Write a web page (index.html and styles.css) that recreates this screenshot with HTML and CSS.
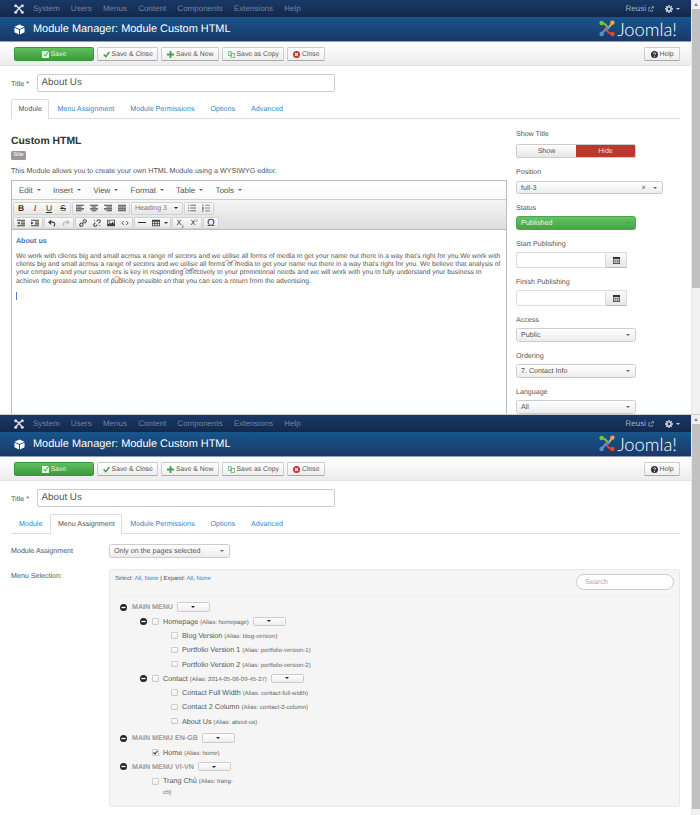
FILE: index.html
```html
<!DOCTYPE html>
<html lang="en">
<head>
<meta charset="utf-8">
<title>Module Manager: Module Custom HTML</title>
<link rel="stylesheet" href="styles.css">
</head>
<body>
<svg class="defs" width="0" height="0" aria-hidden="true">
  <defs>
    <symbol id="i-joomla" viewBox="0 0 12 12"><g fill="none" stroke="currentColor" stroke-width="2"><path d="M2 2c3 1 5 4 8 8"/><path d="M10 2c-3 1-5 4-8 8"/></g><g fill="currentColor"><circle cx="2" cy="2" r="1.8"/><circle cx="10" cy="2" r="1.8"/><circle cx="2" cy="10" r="1.8"/><circle cx="10" cy="10" r="1.8"/></g></symbol>
    <symbol id="i-cube" viewBox="0 0 12 12"><path fill="currentColor" d="M6 .5 11.5 3 6 5.5.5 3zM.5 4l5 2.3v5.2L.5 9zM11.5 4l-5 2.3v5.2l5-2.5z"/></symbol>
    <symbol id="i-logo" viewBox="0 0 16 17"><g fill="none" stroke-width="2.2"><path stroke="#7ac143" d="M3 3c3 0 5 3 7 6"/><path stroke="#f9a541" d="M13 3c-1 3-4 5-7 7"/><path stroke="#f44321" d="M13 14c-3 0-5-3-7-6"/><path stroke="#5091cd" d="M3 14c1-3 4-5 7-7"/></g><circle cx="2.6" cy="3" r="2.2" fill="#7ac143"/><circle cx="13.4" cy="2.6" r="2.2" fill="#f9a541"/><circle cx="13.4" cy="14" r="2.2" fill="#f44321"/><circle cx="2.6" cy="14" r="2.2" fill="#5091cd"/></symbol>
    <symbol id="i-ext" viewBox="0 0 10 10"><path fill="none" stroke="currentColor" stroke-width="1.2" d="M7.5 6v2.5h-6v-6H4M5 5l3.500-3.500M6 1h3v3"/></symbol>
    <symbol id="i-gear" viewBox="0 0 12 12"><circle cx="6" cy="6" r="3.200" fill="none" stroke="currentColor" stroke-width="2.200"/><path stroke="currentColor" stroke-width="2" d="M6 0v2M6 10v2M0 6h2M10 6h2M1.800 1.800l1.400 1.400M8.800 8.800l1.400 1.400M10.200 1.800 8.800 3.200M3.200 8.800l-1.400 1.400"/></symbol>
    <symbol id="i-save" viewBox="0 0 10 10"><path fill="currentColor" d="M0 0h8l2 2v8H0zm2 5.500 3 2.500 4-6-1-.8L4.700 6 3 4.700z" fill-rule="evenodd"/></symbol>
    <symbol id="i-check" viewBox="0 0 10 10"><path fill="none" stroke="currentColor" stroke-width="2.200" d="m1 5 3 3 5-6.500"/></symbol>
    <symbol id="i-plus" viewBox="0 0 10 10"><path fill="currentColor" d="M3.700 0h2.600v3.700H10v2.600H6.300V10H3.700V6.300H0V3.700h3.700z"/></symbol>
    <symbol id="i-copy" viewBox="0 0 10 10"><path fill="none" stroke="currentColor" d="M.5.500h4v6h-4zM4.500 3.500h5v6h-5z"/></symbol>
    <symbol id="i-close" viewBox="0 0 10 10"><circle cx="5" cy="5" r="5" fill="currentColor"/><path stroke="#fff" stroke-width="1.600" d="m3 3 4 4M7 3 3 7"/></symbol>
    <symbol id="i-help" viewBox="0 0 10 10"><circle cx="5" cy="5" r="5" fill="currentColor"/><path fill="none" stroke="#fff" stroke-width="1.300" d="M3.400 3.800C3.600 2 6.700 2 6.700 3.800 6.700 5 5 4.800 5 6.200"/><path stroke="#fff" stroke-width="1.300" d="M5 7v1.300"/></symbol>
    <symbol id="i-cal" viewBox="0 0 10 10"><path fill="currentColor" fill-rule="evenodd" d="M0 0h10v10H0zm1 3v6h8V3zm1 1h2v1.500H2zm3 0h3v1.500H5zM2 6.500h2V8H2zm3 0h3V8H5z"/></symbol>
    <symbol id="i-minus" viewBox="0 0 10 10"><circle cx="5" cy="5" r="5" fill="currentColor"/><path fill="#fff" d="M2 4h6v2H2z"/></symbol>
    <symbol id="i-left" viewBox="0 0 10 10"><path stroke="currentColor" stroke-width="1.300" d="M0 1.500h10M0 3.800h7M0 6.100h10M0 8.400h7" fill="none"/></symbol>
    <symbol id="i-center" viewBox="0 0 10 10"><path stroke="currentColor" stroke-width="1.300" d="M0 1.500h10M2 3.800h6M0 6.100h10M2 8.400h6" fill="none"/></symbol>
    <symbol id="i-right" viewBox="0 0 10 10"><path stroke="currentColor" stroke-width="1.300" d="M0 1.500h10M3 3.800h7M0 6.100h10M3 8.400h7" fill="none"/></symbol>
    <symbol id="i-just" viewBox="0 0 10 10"><path stroke="currentColor" stroke-width="1.300" d="M0 1.500h10M0 3.800h10M0 6.100h10M0 8.400h10" fill="none"/></symbol>
    <symbol id="i-ul" viewBox="0 0 10 10"><path stroke="currentColor" d="M3 1.500h7M3 5h7M3 8.500h7M0 1.500h1.500M0 5h1.500M0 8.500h1.500" fill="none"/></symbol>
    <symbol id="i-ol" viewBox="0 0 10 10"><path stroke="currentColor" d="M4 1.500h6M4 5h6M4 8.500h6M1 0v3M0 4.500h2V6H0v1.500h2M0 9.500h2" fill="none" stroke-width=".8"/></symbol>
    <symbol id="i-outdent" viewBox="0 0 10 10"><path stroke="currentColor" stroke-width="1.300" d="M0 1.500h10M5 3.800h5M5 6.100h5M0 8.400h10" fill="none"/><path fill="currentColor" d="M3.500 3.200v3.600L0 5z"/></symbol>
    <symbol id="i-indent" viewBox="0 0 10 10"><path stroke="currentColor" stroke-width="1.300" d="M0 1.500h10M5 3.800h5M5 6.100h5M0 8.400h10" fill="none"/><path fill="currentColor" d="M0 3.200v3.600L3.500 5z"/></symbol>
    <symbol id="i-undo" viewBox="0 0 10 10"><path fill="none" stroke="currentColor" stroke-width="1.600" d="M3 4h3c3 0 3 4 1 5"/><path fill="currentColor" d="M4 .5v7L0 4z"/></symbol>
    <symbol id="i-redo" viewBox="0 0 10 10"><path fill="none" stroke="currentColor" stroke-width="1.600" d="M7 4H4c-3 0-3 4-1 5"/><path fill="currentColor" d="M6 .5v7L10 4z"/></symbol>
    <symbol id="i-link" viewBox="0 0 10 10"><path fill="none" stroke="currentColor" stroke-width="1.300" d="M4.500 3 6 1.500c2-1.500 4 .7 2.500 2.500L7 5.500M5.500 7 4 8.500C2 10 0 7.800 1.500 6L3 4.500M3.500 6.500l3-3"/></symbol>
    <symbol id="i-unlink" viewBox="0 0 10 10"><path fill="none" stroke="currentColor" stroke-width="1.300" d="M4.500 3 6 1.500c2-1.500 4 .7 2.500 2.500L7 5.500M5.500 7 4 8.500C2 10 0 7.800 1.500 6L3 4.500"/><path stroke="currentColor" d="m1 1 1.500 1.500M7.500 7.500 9 9"/></symbol>
    <symbol id="i-image" viewBox="0 0 10 10"><path fill="currentColor" fill-rule="evenodd" d="M0 1h10v8H0zm1 1v5l2.500-2.500L5 6l2-2.500L9 6V2zm1 .5h1.500V4H2z"/></symbol>
    <symbol id="i-code" viewBox="0 0 10 10"><path fill="none" stroke="currentColor" stroke-width="1.100" d="M3.500 2.500 1 5l2.500 2.500M6.500 2.500 9 5 6.500 7.500"/></symbol>
    <symbol id="i-table" viewBox="0 0 10 10"><path fill="currentColor" fill-rule="evenodd" d="M0 1h10v8H0zm1 2.500V5h2V3.500zm3 0V5h2V3.500zm3 0V5h2V3.500zM1 6v2h2V6zm3 0v2h2V6zm3 0v2h2V6z"/></symbol>
  </defs>
</svg>

<section class="screen screen-top">
  <div class="page">
    <nav class="navbar">
      <svg class="nav-logo"><use href="#i-joomla"/></svg>
      <ul class="nav-menu"><li>System</li><li>Users</li><li>Menus</li><li>Content</li><li>Components</li><li>Extensions</li><li>Help</li></ul>
      <div class="nav-right"><span>Reusi</span><svg class="nav-ext"><use href="#i-ext"/></svg><svg class="nav-gear"><use href="#i-gear"/></svg><i class="caret caret-light"></i></div>
    </nav>
    <header class="header">
      <svg class="head-icon"><use href="#i-cube"/></svg>
      <h1>Module Manager: Module Custom HTML</h1>
      <div class="brand"><svg class="brand-mark"><use href="#i-logo"/></svg><span>Joomla!</span></div>
    </header>
    <div class="toolbar">
      <button class="btn btn-save"><svg class="ico"><use href="#i-save"/></svg>Save</button>
      <button class="btn"><svg class="ico ico-green"><use href="#i-check"/></svg>Save &amp; Close</button>
      <button class="btn"><svg class="ico ico-green"><use href="#i-plus"/></svg>Save &amp; New</button>
      <button class="btn"><svg class="ico ico-green"><use href="#i-copy"/></svg>Save as Copy</button>
      <button class="btn"><svg class="ico ico-red"><use href="#i-close"/></svg>Close</button>
      <button class="btn btn-help"><svg class="ico ico-dark"><use href="#i-help"/></svg>Help</button>
    </div>
    <div class="content">
      <div class="title-row"><label>Title *</label><div class="title-input">About Us</div></div>
      <ul class="tabs">
        <li class="tab active">Module</li><li class="tab">Menu Assignment</li><li class="tab">Module Permissions</li><li class="tab">Options</li><li class="tab">Advanced</li>
      </ul>
      <div class="columns">
        <div class="col-main">
          <h2>Custom HTML</h2>
          <span class="badge">Site</span>
          <p class="desc">This Module allows you to create your own HTML Module using a WYSIWYG editor.</p>
          <div class="editor">
            <div class="ed-menu">
              <span>Edit<i class="caret"></i></span><span>Insert<i class="caret"></i></span><span>View<i class="caret"></i></span><span>Format<i class="caret"></i></span><span>Table<i class="caret"></i></span><span>Tools<i class="caret"></i></span>
            </div>
            <div class="ed-tools">
              <div class="ed-row">
                <div class="ed-group"><b class="tb">B</b><i class="tb tb-i">I</i><u class="tb">U</u><s class="tb">S</s></div>
                <div class="ed-group"><svg class="tb-svg"><use href="#i-left"/></svg><svg class="tb-svg"><use href="#i-center"/></svg><svg class="tb-svg"><use href="#i-right"/></svg><svg class="tb-svg"><use href="#i-just"/></svg></div>
                <div class="ed-group ed-list"><span>Heading 3</span><i class="caret caret-dark"></i></div>
                <div class="ed-group"><svg class="tb-svg"><use href="#i-ul"/></svg><svg class="tb-svg"><use href="#i-ol"/></svg></div>
              </div>
              <div class="ed-row">
                <div class="ed-group"><svg class="tb-svg"><use href="#i-outdent"/></svg><svg class="tb-svg"><use href="#i-indent"/></svg></div>
                <div class="ed-group"><svg class="tb-svg"><use href="#i-undo"/></svg><svg class="tb-svg tb-off"><use href="#i-redo"/></svg></div>
                <div class="ed-group"><svg class="tb-svg"><use href="#i-link"/></svg><svg class="tb-svg"><use href="#i-unlink"/></svg><svg class="tb-svg"><use href="#i-image"/></svg><svg class="tb-svg"><use href="#i-code"/></svg></div>
                <div class="ed-group"><span class="tb-hr"></span><svg class="tb-svg"><use href="#i-table"/></svg><i class="caret caret-tool"></i></div>
                <div class="ed-group"><span class="tb tb-sub">X<sub>2</sub></span><span class="tb tb-sub">X<sup>2</sup></span></div>
                <div class="ed-group"><span class="tb tb-omega">Ω</span></div>
              </div>
            </div>
            <div class="ed-body">
              <h3>About us</h3>
              <p>We work with clients big and small across a range of sectors and we <span class="spell">utilise</span> all forms of media to get your name out there in a way that's right for you.We work with<br>clients big and small across a range of sectors and we <span class="spell">utilise</span> all forms of media to get your name out there in a way that's right for you. We believe that analysis of<br>your company and your custom <span class="spell">ers</span> is key in responding effectively to your promotional needs and we will work with you to fully understand your business to<br>achieve the greatest amount of publicity possible so that you can see a return from the advertising.</p>
              <span class="ed-caret"></span>
            </div>
          </div>
        </div>
        <aside class="col-side">
          <div class="field field-toggle"><label>Show Title</label><div class="toggle"><span>Show</span><span class="toggle-on">Hide</span></div></div>
          <div class="field field-pos"><label>Position</label><div class="select select-wide"><span>full-3</span><em>×</em><i class="caret"></i></div></div>
          <div class="field"><label>Status</label><div class="select select-green"><span>Published</span><i class="caret"></i></div></div>
          <div class="field"><label>Start Publishing</label><div class="date"><div class="date-input"></div><div class="date-btn"><svg class="ico ico-dark"><use href="#i-cal"/></svg></div></div></div>
          <div class="field"><label>Finish Publishing</label><div class="date"><div class="date-input"></div><div class="date-btn"><svg class="ico ico-dark"><use href="#i-cal"/></svg></div></div></div>
          <div class="field"><label>Access</label><div class="select"><span>Public</span><i class="caret"></i></div></div>
          <div class="field"><label>Ordering</label><div class="select"><span>7. Contact Info</span><i class="caret"></i></div></div>
          <div class="field"><label>Language</label><div class="select"><span>All</span><i class="caret"></i></div></div>
        </aside>
      </div>
    </div>
  </div>
  <div class="scrollbar"><span class="arrow"></span><span class="thumb"></span></div>
</section>

<section class="screen screen-bottom">
  <div class="page">
    <nav class="navbar">
      <svg class="nav-logo"><use href="#i-joomla"/></svg>
      <ul class="nav-menu"><li>System</li><li>Users</li><li>Menus</li><li>Content</li><li>Components</li><li>Extensions</li><li>Help</li></ul>
      <div class="nav-right"><span>Reusi</span><svg class="nav-ext"><use href="#i-ext"/></svg><svg class="nav-gear"><use href="#i-gear"/></svg><i class="caret caret-light"></i></div>
    </nav>
    <header class="header">
      <svg class="head-icon"><use href="#i-cube"/></svg>
      <h1>Module Manager: Module Custom HTML</h1>
      <div class="brand"><svg class="brand-mark"><use href="#i-logo"/></svg><span>Joomla!</span></div>
    </header>
    <div class="toolbar">
      <button class="btn btn-save"><svg class="ico"><use href="#i-save"/></svg>Save</button>
      <button class="btn"><svg class="ico ico-green"><use href="#i-check"/></svg>Save &amp; Close</button>
      <button class="btn"><svg class="ico ico-green"><use href="#i-plus"/></svg>Save &amp; New</button>
      <button class="btn"><svg class="ico ico-green"><use href="#i-copy"/></svg>Save as Copy</button>
      <button class="btn"><svg class="ico ico-red"><use href="#i-close"/></svg>Close</button>
      <button class="btn btn-help"><svg class="ico ico-dark"><use href="#i-help"/></svg>Help</button>
    </div>
    <div class="content">
      <div class="title-row"><label>Title *</label><div class="title-input">About Us</div></div>
      <ul class="tabs tabs-second">
        <li class="tab">Module</li><li class="tab active">Menu Assignment</li><li class="tab">Module Permissions</li><li class="tab">Options</li><li class="tab">Advanced</li>
      </ul>
      <div class="assign-row"><label>Module Assignment</label><div class="select select-assign"><span>Only on the pages selected</span><i class="caret"></i></div></div>
      <div class="selection-row">
        <label>Menu Selection:</label>
        <div class="well">
          <div class="well-head">
            <p class="well-links">Select: <a>All</a>, <a>None</a> <span class="sep">|</span> Expand: <a>All</a>, <a>None</a></p>
            <div class="search">Search</div>
          </div>
          <ul class="tree">
            <li class="row lv0"><svg class="minus"><use href="#i-minus"/></svg><strong>MAIN MENU</strong><span class="mini mini-a"><i class="caret caret-dark"></i></span></li>
            <li class="row lv1"><svg class="minus"><use href="#i-minus"/></svg><span class="cb"></span><span class="item">Homepage <small>(Alias: homepage)</small></span><span class="mini"><i class="caret caret-dark"></i></span></li>
            <li class="row lv2"><span class="cb"></span><span class="item">Blog Version <small>(Alias: blog-version)</small></span></li>
            <li class="row lv2"><span class="cb"></span><span class="item">Portfolio Version 1 <small>(Alias: portfolio-version-1)</small></span></li>
            <li class="row lv2"><span class="cb"></span><span class="item">Portfolio Version 2 <small>(Alias: portfolio-version-2)</small></span></li>
            <li class="row lv1"><svg class="minus"><use href="#i-minus"/></svg><span class="cb"></span><span class="item">Contact <small>(Alias: 2014-05-06-09-45-27)</small></span><span class="mini"><i class="caret caret-dark"></i></span></li>
            <li class="row lv2"><span class="cb"></span><span class="item">Contact Full Width <small>(Alias: contact-full-width)</small></span></li>
            <li class="row lv2"><span class="cb"></span><span class="item">Contact 2 Column <small>(Alias: contact-2-column)</small></span></li>
            <li class="row lv2"><span class="cb"></span><span class="item">About Us <small>(Alias: about-us)</small></span></li>
            <li class="row lv0 row-gap"><svg class="minus"><use href="#i-minus"/></svg><strong>MAIN MENU EN-GB</strong><span class="mini mini-a"><i class="caret caret-dark"></i></span></li>
            <li class="row lv1b"><span class="cb cb-on"><svg class="ico ico-dark"><use href="#i-check"/></svg></span><span class="item">Home <small>(Alias: home)</small></span></li>
            <li class="row lv0"><svg class="minus"><use href="#i-minus"/></svg><strong>MAIN MENU VI-VN</strong><span class="mini mini-a"><i class="caret caret-dark"></i></span></li>
            <li class="row row-wrap lv1b"><span class="cb"></span><span class="item item-wrap">Trang Chủ <small>(Alias: trang-ch)</small></span></li>
          </ul>
        </div>
      </div>
    </div>
  </div>
  <div class="scrollbar"><span class="arrow"></span><span class="thumb"></span></div>
</section>
</body>
</html>
```

FILE: styles.css
```css
* { box-sizing: border-box; }
html, body { margin: 0; padding: 0; }
body { font-family: "Liberation Sans", Arial, sans-serif; font-size: 7.2px; color: #555; background: #fff; width: 700px; height: 815px; overflow: hidden; text-rendering: geometricPrecision; }
.defs { display: block; height: 0; }
ul { list-style: none; margin: 0; padding: 0; }
p, h1, h2, h3 { margin: 0; }

.screen { display: flex; overflow: hidden; width: 700px; }
.screen-top { height: 415px; border-bottom: 1px solid #ccc; }
.screen-bottom { height: 400px; }
.page { flex: 1 1 auto; min-width: 0; }

.scrollbar { flex: 0 0 9px; background: #f1f1f1; display: flex; flex-direction: column; align-items: center; border-left: 1px solid #e8e8e8; }
.arrow { width: 0; height: 0; margin: 3px 0 3px; border: 2px solid transparent; border-top: 0; border-bottom: 3px solid #888; }
.thumb { width: 100%; flex: 0 0 279px; background: #c1c1c1; }
.screen-bottom .thumb { flex-basis: 385px; }

.navbar { height: 17px; display: flex; align-items: center; background: linear-gradient(#1a3867, #12294b); padding: 0 11px 0 14px; color: #74849c; }
.nav-logo { width: 10px; height: 10px; color: #d5dae3; flex: none; margin-right: 9px; }
.nav-menu { display: flex; gap: 11.200px; font-size: 8px; }
.nav-right { margin-left: auto; display: flex; align-items: center; color: #a7b2c4; font-size: 8px; }
.nav-ext { width: 6px; height: 6px; margin-left: 2px; }
.nav-gear { width: 8px; height: 8px; margin-left: 11px; color: #dde1e8; }
.caret { display: inline-block; width: 0; height: 0; border: 2px solid transparent; border-bottom: 0; border-top: 2.500px solid #666; vertical-align: middle; margin-left: 4px; }
.caret-light { border-top-color: #cdd3dd; margin-left: 3px; }
.caret-dark { border-top-color: #222; margin: 0; }
.caret-tool { margin: 0 2px 0 1px; border-top-color: #333; }

.header { height: 25px; display: flex; align-items: center; background: linear-gradient(#17568c, #1a3867); padding: 0 14px; color: #fff; border-bottom: 1px solid #8da0bb; }
.head-icon { width: 11px; height: 11px; flex: none; margin-right: 8px; }
h1 { font-size: 10.950px; font-weight: 400; white-space: nowrap; }
.brand { margin-left: auto; display: flex; align-items: center; gap: 2px; }
.brand-mark { width: 16px; height: 17px; }
.brand span { font-family: Lato, sans-serif; font-weight: 300; font-size: 18.300px; line-height: 1; }

.toolbar { height: 24px; display: flex; align-items: flex-start; gap: 3px; padding: 5px 11px 0 14px; background: linear-gradient(#fff, #ececec); border-bottom: 1px solid #e2e2e2; }
.btn { height: 14px; padding: 0 4.600px; display: flex; align-items: center; justify-content: center; gap: 2px; font: 6.800px "Liberation Sans", Arial, sans-serif; text-rendering: geometricPrecision; color: #555; background: linear-gradient(#fff, #eee); border: 1px solid #ccc; border-bottom-color: #aaa; border-radius: 1.500px; white-space: nowrap; }
.btn-save { width: 80px; background: linear-gradient(#60bf60, #3c9c3c); border-color: #3c943c; color: #e8f5e8; }
.btn-help { margin-left: auto; width: 36px; }
.ico { width: 7px; height: 7px; flex: none; color: #e4f3e4; }
.ico-green { color: #4a9d4a; }
.ico-red { color: #bd362f; }
.ico-dark { color: #333; }

.content { padding: 8px 11px 0; }
.title-row { display: flex; align-items: center; }
.title-row label { flex: 0 0 26px; font-size: 7.200px; }
.title-input { width: 298px; height: 18px; border: 1px solid #ccc; border-radius: 2px; padding-left: 3.500px; font-size: 9.800px; line-height: 16px; color: #555; }
.tabs { display: flex; margin-top: 7px; height: 20px; border-bottom: 1px solid #ddd; color: #2384d3; }
.tab { height: 20px; padding: 0 7px; line-height: 18px; font-size: 7.150px; border: 1px solid transparent; border-bottom: 0; white-space: nowrap; color: #2f87c8; }
.tab.active { color: #555; background: #fff; border-color: #ddd; border-radius: 2px 2px 0 0; padding: 0 6.500px; }

.columns { display: flex; gap: 9px; padding-top: 15px; }
.col-main { flex: 0 0 496px; min-width: 0; }
.col-side { flex: 1 1 auto; margin-top: -4px; }
h2 { font-size: 10.400px; font-weight: 700; color: #333; line-height: 12px; margin-top: 2px; }
.badge { display: block; width: 15px; height: 9px; margin-top: 3px; background: #999; color: #eee; border-radius: 1.500px; font-size: 5.500px; font-weight: 700; line-height: 9px; text-align: center; }
.desc { margin-top: 6px; font-size: 7.170px; line-height: 10px; color: #555; white-space: nowrap; }

.editor { margin-top: 4px; border: 1px solid #bbb; border-bottom: 0; height: 240px; }
.ed-menu { height: 19px; display: flex; align-items: center; padding-left: 7px; border-bottom: 1px solid #ccc; background: linear-gradient(#fff, #f9f9f9); font-size: 8px; }
.ed-menu span { margin-right: 12.200px; white-space: nowrap; color: #555; }
.ed-tools { height: 30px; padding: 2px 0 0 1px; background: linear-gradient(#f5f5f5, #ddd); border-bottom: 1px solid #bbb; display: flex; flex-direction: column; gap: 2px; }
.ed-row { display: flex; gap: 1px; height: 12.500px; }
.ed-group { display: flex; align-items: center; gap: 0; height: 12.500px; background: linear-gradient(#fcfcfc, #e6e6e6); border: 1px solid #d2d2d2; border-radius: 1.500px; color: #444; }
.tb { width: 14px; text-align: center; font-size: 8.500px; color: #333; font-style: normal; }
.tb-i { font-style: italic; font-family: "Liberation Serif", serif; }
.tb-svg { width: 8px; height: 8px; margin: 0 3px; color: #444; flex: none; }
.tb-off { color: #bbb; }
.ed-list { width: 52px; justify-content: space-between; padding: 0 4px 0 3px; font-size: 7px; color: #777; }
.tb-hr { width: 8px; height: 1px; background: #333; margin: 0 3px; }
.tb-sub { font-size: 7.500px; }
.tb-sub sub, .tb-sub sup { font-size: 4px; line-height: 0; }
.tb-omega { font-size: 10.500px; }
.ed-body { padding: 7px 4px 0; }
.ed-body h3 { font-size: 7.100px; font-weight: 700; color: #3f74b8; line-height: 9px; }
.ed-body p { margin-top: 7px; font-size: 6.770px; line-height: 8.200px; color: #555; white-space: nowrap; }
.spell { text-decoration: underline wavy #d88; text-decoration-thickness: .5px; }
.ed-caret { display: block; width: 1px; height: 8px; margin-top: 6px; background: #5a7fc0; }

.field { margin-bottom: 10px; }
.field label { display: block; font-size: 7.100px; line-height: 9px; margin-bottom: 3px; color: #555; white-space: nowrap; }
.field-toggle label { margin-bottom: 5px; }
.field-pos label { margin-bottom: 4px; }
.toggle { display: flex; width: 120px; height: 14px; border: 1px solid #ccc; border-radius: 2px; overflow: hidden; background: linear-gradient(#fff, #e6e6e6); font-size: 7.100px; line-height: 12px; text-align: center; color: #555; }
.toggle span { flex: 1; }
.toggle-on { background: #bd362f; color: #f3d9d7; }
.select { width: 120px; height: 14px; display: flex; align-items: center; padding: 0 5px 0 4px; border: 1px solid #ccc; border-radius: 2.500px; background: linear-gradient(#fff, #ececec); color: #555; font-size: 7.150px; white-space: nowrap; }
.select span { flex: 1; }
.select-wide { width: 147px; height: 13px; }
.select em { font-style: normal; font-size: 8px; margin-right: 3px; color: #666; }
.select-green { background: linear-gradient(#62c462, #46a346); border-color: #51a351; color: #eaf6ea; }
.select-green .caret { border-top-color: #46a046; }
.date { display: flex; width: 111px; height: 16px; }
.date-input { flex: 0 0 90px; border: 1px solid #ddd; border-radius: 2px 0 0 2px; }
.date-btn { flex: 1; display: flex; align-items: center; justify-content: center; background: linear-gradient(#fbfbfb, #e6e6e6); border: 1px solid #ddd; border-left: 0; border-bottom-color: #bbb; }

.assign-row { display: flex; align-items: center; margin-top: 10px; }
.assign-row label, .selection-row label { flex: 0 0 98px; font-size: 7.120px; color: #555; white-space: nowrap; }
.select-assign { width: 121px; height: 14px; }
.selection-row { display: flex; margin-top: 11px; }
.selection-row label { padding-top: 3px; }
.well { flex: 1 1 auto; height: 238px; background: #f5f5f5; border: 1px solid #e9e9e9; border-radius: 2px; padding: 0 5px; }
.well-head { display: flex; justify-content: space-between; height: 27px; padding-top: 4px; border-bottom: 1px solid #efefef; }
.well-links { font-size: 5.950px; color: #555; padding-top: 2px; }
.well-links a { color: #2b85cc; }
.sep { color: #333; }
.search { width: 98px; height: 16px; background: #fff; border: 1px solid #ccc; border-radius: 8px; padding-left: 8px; font-size: 7.200px; line-height: 14px; color: #aaa; }

.tree { padding-top: 3px; }
.row { display: flex; align-items: center; height: 14.250px; white-space: nowrap; font-size: 7.200px; color: #555; }
.lv0 { padding-left: 5px; }
.lv1 { padding-left: 25px; }
.lv1b { padding-left: 37px; }
.lv2 { padding-left: 56px; }
.row-gap { margin-top: 2.750px; }
.minus { width: 7px; height: 7px; color: #222; flex: none; margin-right: 5px; }
.row strong { color: #999; font-size: 7.100px; font-weight: 700; }
.cb { width: 6.500px; height: 6.500px; flex: none; margin-right: 4.500px; display: flex; align-items: center; justify-content: center; border: 1px solid #ccc; border-radius: 1px; background: linear-gradient(#fff, #eee); }
.cb-on .ico { width: 5px; height: 5px; }
.item small { font-size: 6px; color: #666; }
.mini { display: flex; align-items: center; justify-content: center; width: 33px; height: 9.500px; margin-left: 4px; border: 1px solid #ccc; border-radius: 1.500px; background: linear-gradient(#fff, #eee); }
.row-wrap { height: 26px; margin-top: 2.500px; align-items: flex-start; }
.row-wrap .cb { margin-top: 2px; }
.item-wrap { display: block; white-space: normal; width: 72px; line-height: 10px; }
```
